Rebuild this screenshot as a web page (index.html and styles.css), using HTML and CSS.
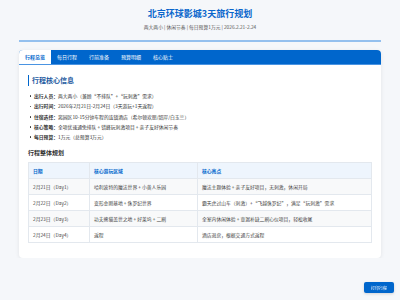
FILE: index.html
```html
<!DOCTYPE html>
<html lang="zh-CN">
<head>
    <meta charset="UTF-8">
    <meta name="viewport" content="width=device-width, initial-scale=1.0">
    <title>北京环球影城3天旅行规划</title>
    <link rel="stylesheet" href="styles.css">
</head>
<body>
    <div class="header">
        <h1>北京环球影城3天旅行规划</h1>
        <p class="sub">两大两小 | 休闲节奏 | 每日预算1万元 | 2026.2.21-2.24</p>
    </div>

    <div class="card">
        <div class="tabs">
            <div class="tab active">行程总览</div>
            <div class="tab">每日行程</div>
            <div class="tab">行前准备</div>
            <div class="tab">预算明细</div>
            <div class="tab">核心贴士</div>
        </div>

        <div class="content">
            <h2>行程核心信息</h2>
            <ul class="info">
                <li><strong>出行人员：</strong>两大两小（兼顾“不排队”+“玩刺激”需求）</li>
                <li><strong>出行时间：</strong>2026年2月21日-2月24日（3天游玩+1天返程）</li>
                <li><strong>住宿选择：</strong>离园区10-15分钟车程的连锁酒店（希尔顿欢朋/韶岸/白玉兰）</li>
                <li><strong>核心策略：</strong>全项优速通免排队 + 错峰玩刺激项目 + 亲子友好休闲节奏</li>
                <li><strong>每日预算：</strong>1万元（总预算3万元）</li>
            </ul>

            <h3>行程整体规划</h3>
            <table class="plan">
                <thead>
                    <tr>
                        <th class="c1">日期</th>
                        <th class="c2">核心游玩区域</th>
                        <th>核心亮点</th>
                    </tr>
                </thead>
                <tbody>
                    <tr>
                        <td>2月21日（Day1）</td>
                        <td>哈利波特的魔法世界 + 小黄人乐园</td>
                        <td>魔法主题体验 + 亲子友好项目，无刺激，休闲开局</td>
                    </tr>
                    <tr>
                        <td>2月22日（Day2）</td>
                        <td>变形金刚基地 + 侏罗纪世界</td>
                        <td>霸天虎过山车（刺激）+“飞越侏罗纪”，满足“玩刺激”需求</td>
                    </tr>
                    <tr>
                        <td>2月23日（Day3）</td>
                        <td>功夫熊猫盖世之地 + 好莱坞 + 二刷</td>
                        <td>全室内休闲体验 + 查漏补缺二刷心仪项目，轻松收尾</td>
                    </tr>
                    <tr>
                        <td>2月24日（Day4）</td>
                        <td>返程</td>
                        <td>酒店退房，根据交通方式返程</td>
                    </tr>
                </tbody>
            </table>
        </div>
    </div>

    <button class="print-btn">打印行程</button>
</body>
</html>
```

FILE: styles.css
```css
body {
    font-family: "Noto Sans CJK SC", "Noto Sans", sans-serif;
    margin: 0;
    padding: 0 19px;
    background: #f5f7fa;
    color: #333;
}
.header {
    text-align: center;
    padding: 8px 0 10px;
    border-bottom: 2px solid #94c0ee;
    margin-bottom: 8px;
}
.header h1 {
    font-size: 9px;
    line-height: 12px;
    margin: 0;
    color: #0a66cc;
    font-weight: bold;
}
.header .sub {
    font-size: 4.8px;
    line-height: 7px;
    margin: 3px 0 0;
    color: #555;
}
.card {
    background: white;
    border-radius: 4px;
    box-shadow: 0 1px 4px rgba(0,0,0,0.08);
    overflow: hidden;
}
.tabs {
    display: flex;
    background: #0066cc;
    border-bottom: 1px solid #4a94e2;
    height: 14px;
}
.tab {
    padding: 0 6px;
    font-size: 5px;
    line-height: 14px;
    color: white;
}
.tab.active {
    background: white;
    color: #0066cc;
    font-weight: bold;
}
.content {
    padding: 10px 9px 15px;
}
.content h2 {
    font-size: 7px;
    line-height: 11px;
    margin: 0 0 5px;
    padding-left: 3px;
    border-left: 1.5px solid #0066cc;
    color: #1d5aa0;
}
.info {
    margin: 0;
    padding: 0;
    list-style: none;
    font-size: 4.8px;
    line-height: 10.3px;
    color: #333;
}
.info li {
    position: relative;
    padding-left: 6px;
}
.info li::before {
    content: "";
    position: absolute;
    left: 1.5px;
    top: 4.3px;
    width: 1.8px;
    height: 1.8px;
    border-radius: 50%;
    background: #333;
}
.content h3 {
    font-size: 6px;
    line-height: 8px;
    margin: 7px 0 5px;
    color: #333;
}
.plan {
    width: 100%;
    table-layout: fixed;
    border-collapse: collapse;
    font-size: 4.8px;
}
.plan th, .plan td {
    box-sizing: border-box;
    text-align: left;
    padding: 0 4px;
    height: 16px;
    border: 0.5px solid #e3e8ee;
    white-space: nowrap;
}
.plan th {
    background: #eef5fd;
    color: #0066cc;
    font-weight: bold;
}
.plan td { color: #444; }
.plan tbody tr:nth-child(odd) { background: #f8f9fa; }
.plan .c1 { width: 61px; }
.plan .c2 { width: 108px; }
.print-btn {
    position: fixed;
    right: 6px;
    bottom: 7px;
    width: 30px;
    height: 11px;
    padding: 0;
    border: none;
    border-radius: 2px;
    background: #0066cc;
    color: white;
    font-family: "Noto Sans CJK SC", sans-serif;
    font-size: 4px;
    box-shadow: 0 1px 3px rgba(0,0,0,0.15);
}
```
